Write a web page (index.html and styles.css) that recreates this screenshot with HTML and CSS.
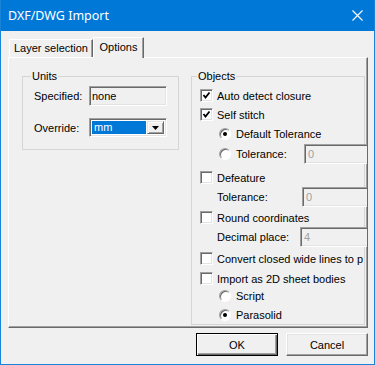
FILE: index.html
```html
<!DOCTYPE html>
<html lang="en">
<head>
    <meta charset="UTF-8">
    <meta name="viewport" content="width=device-width, initial-scale=1.0">
    <title>DXF/DWG Import</title>
    <link rel="stylesheet" href="styles.css">
</head>
<body>
    <div class="window">
        <div class="titlebar">
            <span class="title">DXF/DWG Import</span>
            <svg class="close" width="11" height="11" viewBox="0 0 11 11">
                <path d="M0.5 0.5 L10.5 10.5 M10.5 0.5 L0.5 10.5" stroke="#fff" stroke-width="1.1" fill="none"/>
            </svg>
        </div>

        <div class="client">
            <div class="tabs">
                <div class="tab tab-layers">Layer selection</div>
                <div class="tab tab-options active">Options</div>
            </div>

            <div class="page">
                <fieldset class="group units">
                    <legend>Units</legend>
                    <div class="field">
                        <label>Specified:</label>
                        <div class="edit readonly">none</div>
                    </div>
                    <div class="field field-override">
                        <label>Override:</label>
                        <div class="combo">
                            <span class="combo-value">mm</span>
                            <span class="combo-btn">
                                <svg width="7" height="4" viewBox="0 0 7 4"><path d="M0 0 H7 L3.5 4 Z" fill="#000"/></svg>
                            </span>
                        </div>
                    </div>
                </fieldset>

                <fieldset class="group objects">
                    <legend>Objects</legend>

                    <div class="row">
                        <span class="check checked"><svg width="9" height="9" viewBox="0 0 9 9"><path d="M1.5 4 L3.5 6.5 L7.5 1.5" stroke="#000" stroke-width="1.8" fill="none"/></svg></span>
                        <span>Auto detect closure</span>
                    </div>
                    <div class="row">
                        <span class="check checked"><svg width="9" height="9" viewBox="0 0 9 9"><path d="M1.5 4 L3.5 6.5 L7.5 1.5" stroke="#000" stroke-width="1.8" fill="none"/></svg></span>
                        <span>Self stitch</span>
                    </div>
                    <div class="row sub">
                        <span class="radio selected"></span>
                        <span>Default Tolerance</span>
                    </div>
                    <div class="row sub mt1">
                        <span class="radio"></span>
                        <span class="lbl lbl-tol">Tolerance:</span>
                        <div class="edit readonly grey">0</div>
                    </div>

                    <div class="row mt5">
                        <span class="check"></span>
                        <span>Defeature</span>
                    </div>
                    <div class="row text-row">
                        <span class="lbl lbl-deftol">Tolerance:</span>
                        <div class="edit readonly grey">0</div>
                    </div>

                    <div class="row mt2">
                        <span class="check"></span>
                        <span>Round coordinates</span>
                    </div>
                    <div class="row text-row">
                        <span class="lbl lbl-dec">Decimal place:</span>
                        <div class="edit readonly grey">4</div>
                    </div>

                    <div class="row mt3">
                        <span class="check"></span>
                        <span class="clipped">Convert closed wide lines to polygons</span>
                    </div>
                    <div class="row mt1">
                        <span class="check"></span>
                        <span>Import as 2D sheet bodies</span>
                    </div>
                    <div class="row sub mtn2">
                        <span class="radio"></span>
                        <span>Script</span>
                    </div>
                    <div class="row sub">
                        <span class="radio selected"></span>
                        <span>Parasolid</span>
                    </div>
                </fieldset>
            </div>

            <div class="buttons">
                <button class="btn btn-default">OK</button>
                <button class="btn">Cancel</button>
            </div>
        </div>
    </div>
</body>
</html>
```

FILE: styles.css
```css
body {
    margin: 0;
    padding: 0;
    font-family: 'Liberation Sans', Arial, sans-serif;
    font-size: 11px;
    color: #000;
    background-color: #f0f0f0;
}

.window {
    width: 375px;
    height: 365px;
    box-sizing: border-box;
    border: 1px solid #1883d7;
    border-top: none;
    background-color: #f0f0f0;
    overflow: hidden;
}

.titlebar {
    height: 31px;
    margin: 0 -1px;
    background-color: #0078d7;
    display: flex;
    align-items: center;
    justify-content: space-between;
    padding: 0 12px 0 8px;
}

.title {
    font-family: 'Noto Sans', sans-serif;
    font-size: 12.5px;
    color: #fff;
}

.client {
    padding: 6px 6px 0 7px;
}

/* tabs */

.tabs {
    display: flex;
    align-items: flex-end;
    height: 20px;
    padding-left: 1px;
}

.tab {
    box-sizing: border-box;
    height: 18px;
    line-height: 16px;
    text-align: center;
    border-top: 1px solid #fff;
    border-left: 1px solid #fff;
    border-right: 1px solid #696969;
    box-shadow: inset -1px 0 0 #a0a0a0;
    background-color: #f0f0f0;
}

.tab-layers {
    width: 84px;
}

.tab-options {
    width: 51px;
}

.tab.active {
    height: 21px;
    margin-bottom: -1px;
    line-height: 19px;
    position: relative;
    z-index: 1;
}

/* tab page */

.page {
    box-sizing: border-box;
    height: 271px;
    display: flex;
    align-items: flex-start;
    gap: 12px;
    padding: 11px 0 0 13px;
    border-top: 1px solid #fff;
    border-left: 1px solid #fff;
    border-right: 1px solid #696969;
    border-bottom: 1px solid #696969;
    box-shadow: inset -1px -1px 0 #a0a0a0;
    overflow: hidden;
}

.group {
    margin: 0;
    min-width: 0;
    flex-shrink: 0;
    box-sizing: border-box;
    border: 1px solid #d5d5d5;
}

.group legend {
    padding: 0 1px;
    margin-left: -3px;
    line-height: 14px;
}

.units {
    width: 157px;
    padding: 3px 10px 12px 11px;
}

.objects {
    width: 174px;
    padding: 3px 0 0 8px;
}

.field {
    display: flex;
    align-items: center;
}

.field label {
    width: 55px;
}

.field-override {
    margin-top: 12px;
}

/* edits */

.edit {
    box-sizing: border-box;
    width: 78px;
    height: 20px;
    line-height: 18px;
    padding-left: 2px;
    border-top: 1px solid #a0a0a0;
    border-left: 1px solid #a0a0a0;
    border-right: 1px solid #fff;
    border-bottom: 1px solid #fff;
    box-shadow: inset 1px 1px 0 #696969, inset -1px -1px 0 #e3e3e3;
    background-color: #f0f0f0;
    flex-shrink: 0;
}

.edit.grey {
    width: 70px;
    color: #a0a0a0;
    padding-left: 3px;
}

.combo {
    box-sizing: border-box;
    width: 78px;
    height: 19px;
    display: flex;
    padding: 2px;
    border-top: 1px solid #a0a0a0;
    border-left: 1px solid #a0a0a0;
    border-right: 1px solid #fff;
    border-bottom: 1px solid #fff;
    box-shadow: inset 1px 1px 0 #696969, inset -1px -1px 0 #e3e3e3;
    background-color: #fff;
}

.combo-value {
    flex: 1;
    background-color: #0078d7;
    color: #fff;
    line-height: 13px;
    padding-left: 2px;
}

.combo-btn {
    box-sizing: border-box;
    width: 17px;
    margin-left: 1px;
    display: flex;
    align-items: center;
    justify-content: center;
    background-color: #f0f0f0;
    border-top: 1px solid #e3e3e3;
    border-left: 1px solid #e3e3e3;
    border-right: 1px solid #696969;
    border-bottom: 1px solid #696969;
    box-shadow: inset 1px 1px 0 #fff, inset -1px -1px 0 #a0a0a0;
}

/* objects rows */

.row {
    display: flex;
    align-items: center;
    height: 19px;
    white-space: nowrap;
}

.row.sub {
    padding-left: 19px;
}

.row.text-row {
    padding-left: 17px;
}

.mt1 { margin-top: 1px; }
.mt2 { margin-top: 2px; }
.mt3 { margin-top: 3px; }
.mt5 { margin-top: 5px; }
.mtn2 { margin-top: -2px; }

.clipped {
    width: 146px;
    overflow: hidden;
    flex-shrink: 0;
}

.check {
    box-sizing: border-box;
    width: 13px;
    height: 13px;
    margin-right: 4px;
    display: flex;
    align-items: center;
    justify-content: center;
    background-color: #fff;
    border-top: 1px solid #a0a0a0;
    border-left: 1px solid #a0a0a0;
    border-right: 1px solid #fff;
    border-bottom: 1px solid #fff;
    box-shadow: inset 1px 1px 0 #696969, inset -1px -1px 0 #e3e3e3;
    flex-shrink: 0;
}

.radio {
    box-sizing: border-box;
    width: 12px;
    height: 12px;
    margin-right: 5px;
    border-radius: 50%;
    background-color: #fff;
    border: 1px solid;
    border-color: #a0a0a0 #fff #fff #a0a0a0;
    box-shadow: inset 1px 1px 0 #696969;
    position: relative;
    flex-shrink: 0;
}

.radio.selected::after {
    content: "";
    position: absolute;
    left: 3px;
    top: 3px;
    width: 4px;
    height: 4px;
    border-radius: 50%;
    background-color: #000;
}

.lbl {
    flex-shrink: 0;
}

.lbl-tol {
    width: 68px;
}

.lbl-deftol {
    width: 85px;
}

.lbl-dec {
    width: 83px;
}

/* buttons */

.buttons {
    display: flex;
    justify-content: flex-end;
    gap: 8px;
    margin-top: 5px;
}

.btn {
    box-sizing: border-box;
    width: 82px;
    height: 23px;
    padding: 0;
    font-family: 'Liberation Sans', Arial, sans-serif;
    font-size: 11px;
    color: #000;
    background-color: #f0f0f0;
    border-top: 1px solid #fff;
    border-left: 1px solid #fff;
    border-right: 1px solid #696969;
    border-bottom: 1px solid #696969;
    box-shadow: inset -1px -1px 0 #a0a0a0, inset 1px 1px 0 #e3e3e3;
}

.btn-default {
    border: 1px solid #000;
    box-shadow: inset 1px 1px 0 #fff, inset -1px -1px 0 #696969, inset -2px -2px 0 #a0a0a0;
}
```
